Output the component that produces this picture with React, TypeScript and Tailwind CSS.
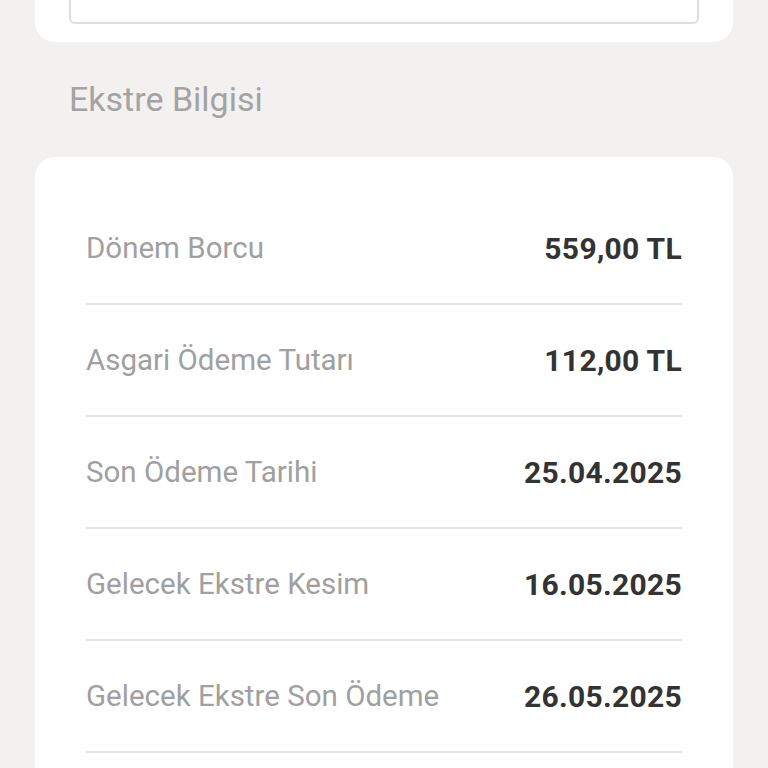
export default function App() {
  const rows = [
    ["Dönem Borcu", "559,00 TL"],
    ["Asgari Ödeme Tutarı", "112,00 TL"],
    ["Son Ödeme Tarihi", "25.04.2025"],
    ["Gelecek Ekstre Kesim", "16.05.2025"],
    ["Gelecek Ekstre Son Ödeme", "26.05.2025"],
  ];
  return (
    <div className="w-[768px] h-[768px] overflow-hidden bg-[#f2f1ef]" style={{ fontFamily: "Roboto, sans-serif" }}>
      <div className="mx-[35px] -mt-[40px] h-[82px] rounded-b-[20px] bg-white px-[34px]">
        <div className="h-[64px] rounded-b-[6px] border-2 border-t-0 border-[#dedede]" />
      </div>
      <div className="flex h-[115px] items-center pl-[69px] pb-[2px]">
        <div className="text-[34px] leading-[40px] text-[#a3a3a3]">Ekstre Bilgisi</div>
      </div>
      <div className="mx-[35px] rounded-[20px] bg-white px-[51px] pt-[36px] pb-[60px]">
        {rows.map(([l, v], i) => (
          <div key={l} className={`flex items-center justify-between border-b-2 border-[#e3e3e3] ${i === 0 ? "h-[112px]" : "h-[112px]"}`}>
            <span className="text-[29.5px] text-[#a0a0a0]">{l}</span>
            <span className="text-[30px] tracking-[0.3px] font-bold text-[#333333]">{v}</span>
          </div>
        ))}
      </div>
    </div>
  );
}
